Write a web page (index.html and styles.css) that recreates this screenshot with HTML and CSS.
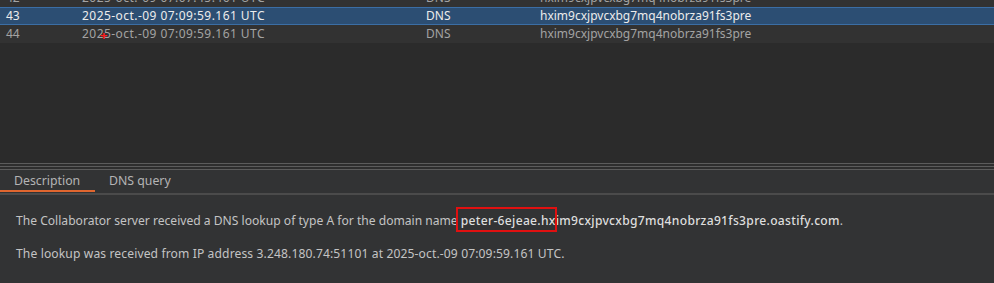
FILE: index.html
```html
<!DOCTYPE html>
<html lang="en">
<head>
    <meta charset="UTF-8">
    <title>Collaborator interactions</title>
    <link rel="stylesheet" href="styles.css">
</head>
<body>
    <div class="grid">
        <div class="rows">
            <div class="row">
                <span>42</span>
                <span class="time">2025-oct.-09 07:07:45.461 UTC</span>
                <span>DNS</span>
                <span>hxim9cxjpvcxbg7mq4nobrza91fs3pre</span>
            </div>
            <div class="row selected">
                <span>43</span>
                <span class="time">2025-oct.-09 07:09:59.161 UTC</span>
                <span>DNS</span>
                <span>hxim9cxjpvcxbg7mq4nobrza91fs3pre</span>
            </div>
            <div class="row">
                <span>44</span>
                <span class="time">2025-oct.-09 07:09:59.161 UTC</span>
                <span>DNS</span>
                <span>hxim9cxjpvcxbg7mq4nobrza91fs3pre</span>
            </div>
        </div>
        <span class="cursor">+</span>
    </div>

    <div class="splitter">
        <div class="line"></div>
        <div class="line"></div>
        <div class="line"></div>
    </div>

    <div class="panel">
        <div class="tabs">
            <div class="tab active">Description</div>
            <div class="tab">DNS query</div>
        </div>
        <div class="content">
            <p>The Collaborator server received a DNS lookup of type A for the domain name
                <span class="domain">peter-6ejeae.hxim9cxjpvcxbg7mq4nobrza91fs3pre.oastify.com<span class="mark"></span></span>.</p>
            <p>The lookup was received from IP address 3.248.180.74:51101 at 2025-oct.-09 07:09:59.161 UTC.</p>
        </div>
    </div>
</body>
</html>
```

FILE: styles.css
```css
body {
    margin: 0;
    background: #2b2b2b;
    font-family: "Noto Sans", "Open Sans", sans-serif;
    font-size: 12px;
    color: #c4c4c4;
    overflow: hidden;
}
.grid {
    position: relative;
    height: 163px;
    overflow: hidden;
}
.rows {
    margin-top: -11px;
}
.row {
    display: grid;
    grid-template-columns: 76px 344px 114px 1fr;
    height: 18px;
    line-height: 18px;
    padding-left: 6px;
    background: #323232;
    color: #a3a3a3;
    box-sizing: border-box;
}
.row .time {
    letter-spacing: 0.45px;
}
.row.selected {
    background: #2c4e73;
    border-top: 1px solid #3b6ea5;
    border-bottom: 1px solid #3b6ea5;
    line-height: 16px;
    color: #ececec;
}
.cursor {
    position: absolute;
    left: 100px;
    top: 26px;
    color: #ff1a1a;
    font-weight: bold;
    font-size: 13px;
    line-height: 18px;
}
.splitter {
    display: flex;
    flex-direction: column;
    gap: 2px;
    background: #2e2e2e;
}
.line {
    height: 1px;
    background: #5c5c5c;
}
.panel {
    background: #323334;
    height: 114px;
}
.tabs {
    display: flex;
    height: 22px;
    border-bottom: 2px solid #4b4b4b;
    padding-top: 1px;
}
.tab {
    padding: 0 14px;
    line-height: 20px;
    color: #b4b4b4;
    font-size: 12.3px;
}
.tab.active {
    width: 67px;
    border-bottom: 2px solid #e0662f;
    margin-bottom: 1px;
}
.content {
    padding: 17px 16px 0;
    font-size: 12.1px;
}
.content p {
    margin: 0 0 15px;
    line-height: 18px;
}
.content p + p {
    letter-spacing: 0.12px;
}
.domain {
    position: relative;
    font-weight: 500;
    color: #dedede;
    letter-spacing: 0.3px;
}
.mark {
    position: absolute;
    left: -5px;
    top: -5px;
    width: 97px;
    height: 21px;
    border: 2px solid #e01010;
}
```
